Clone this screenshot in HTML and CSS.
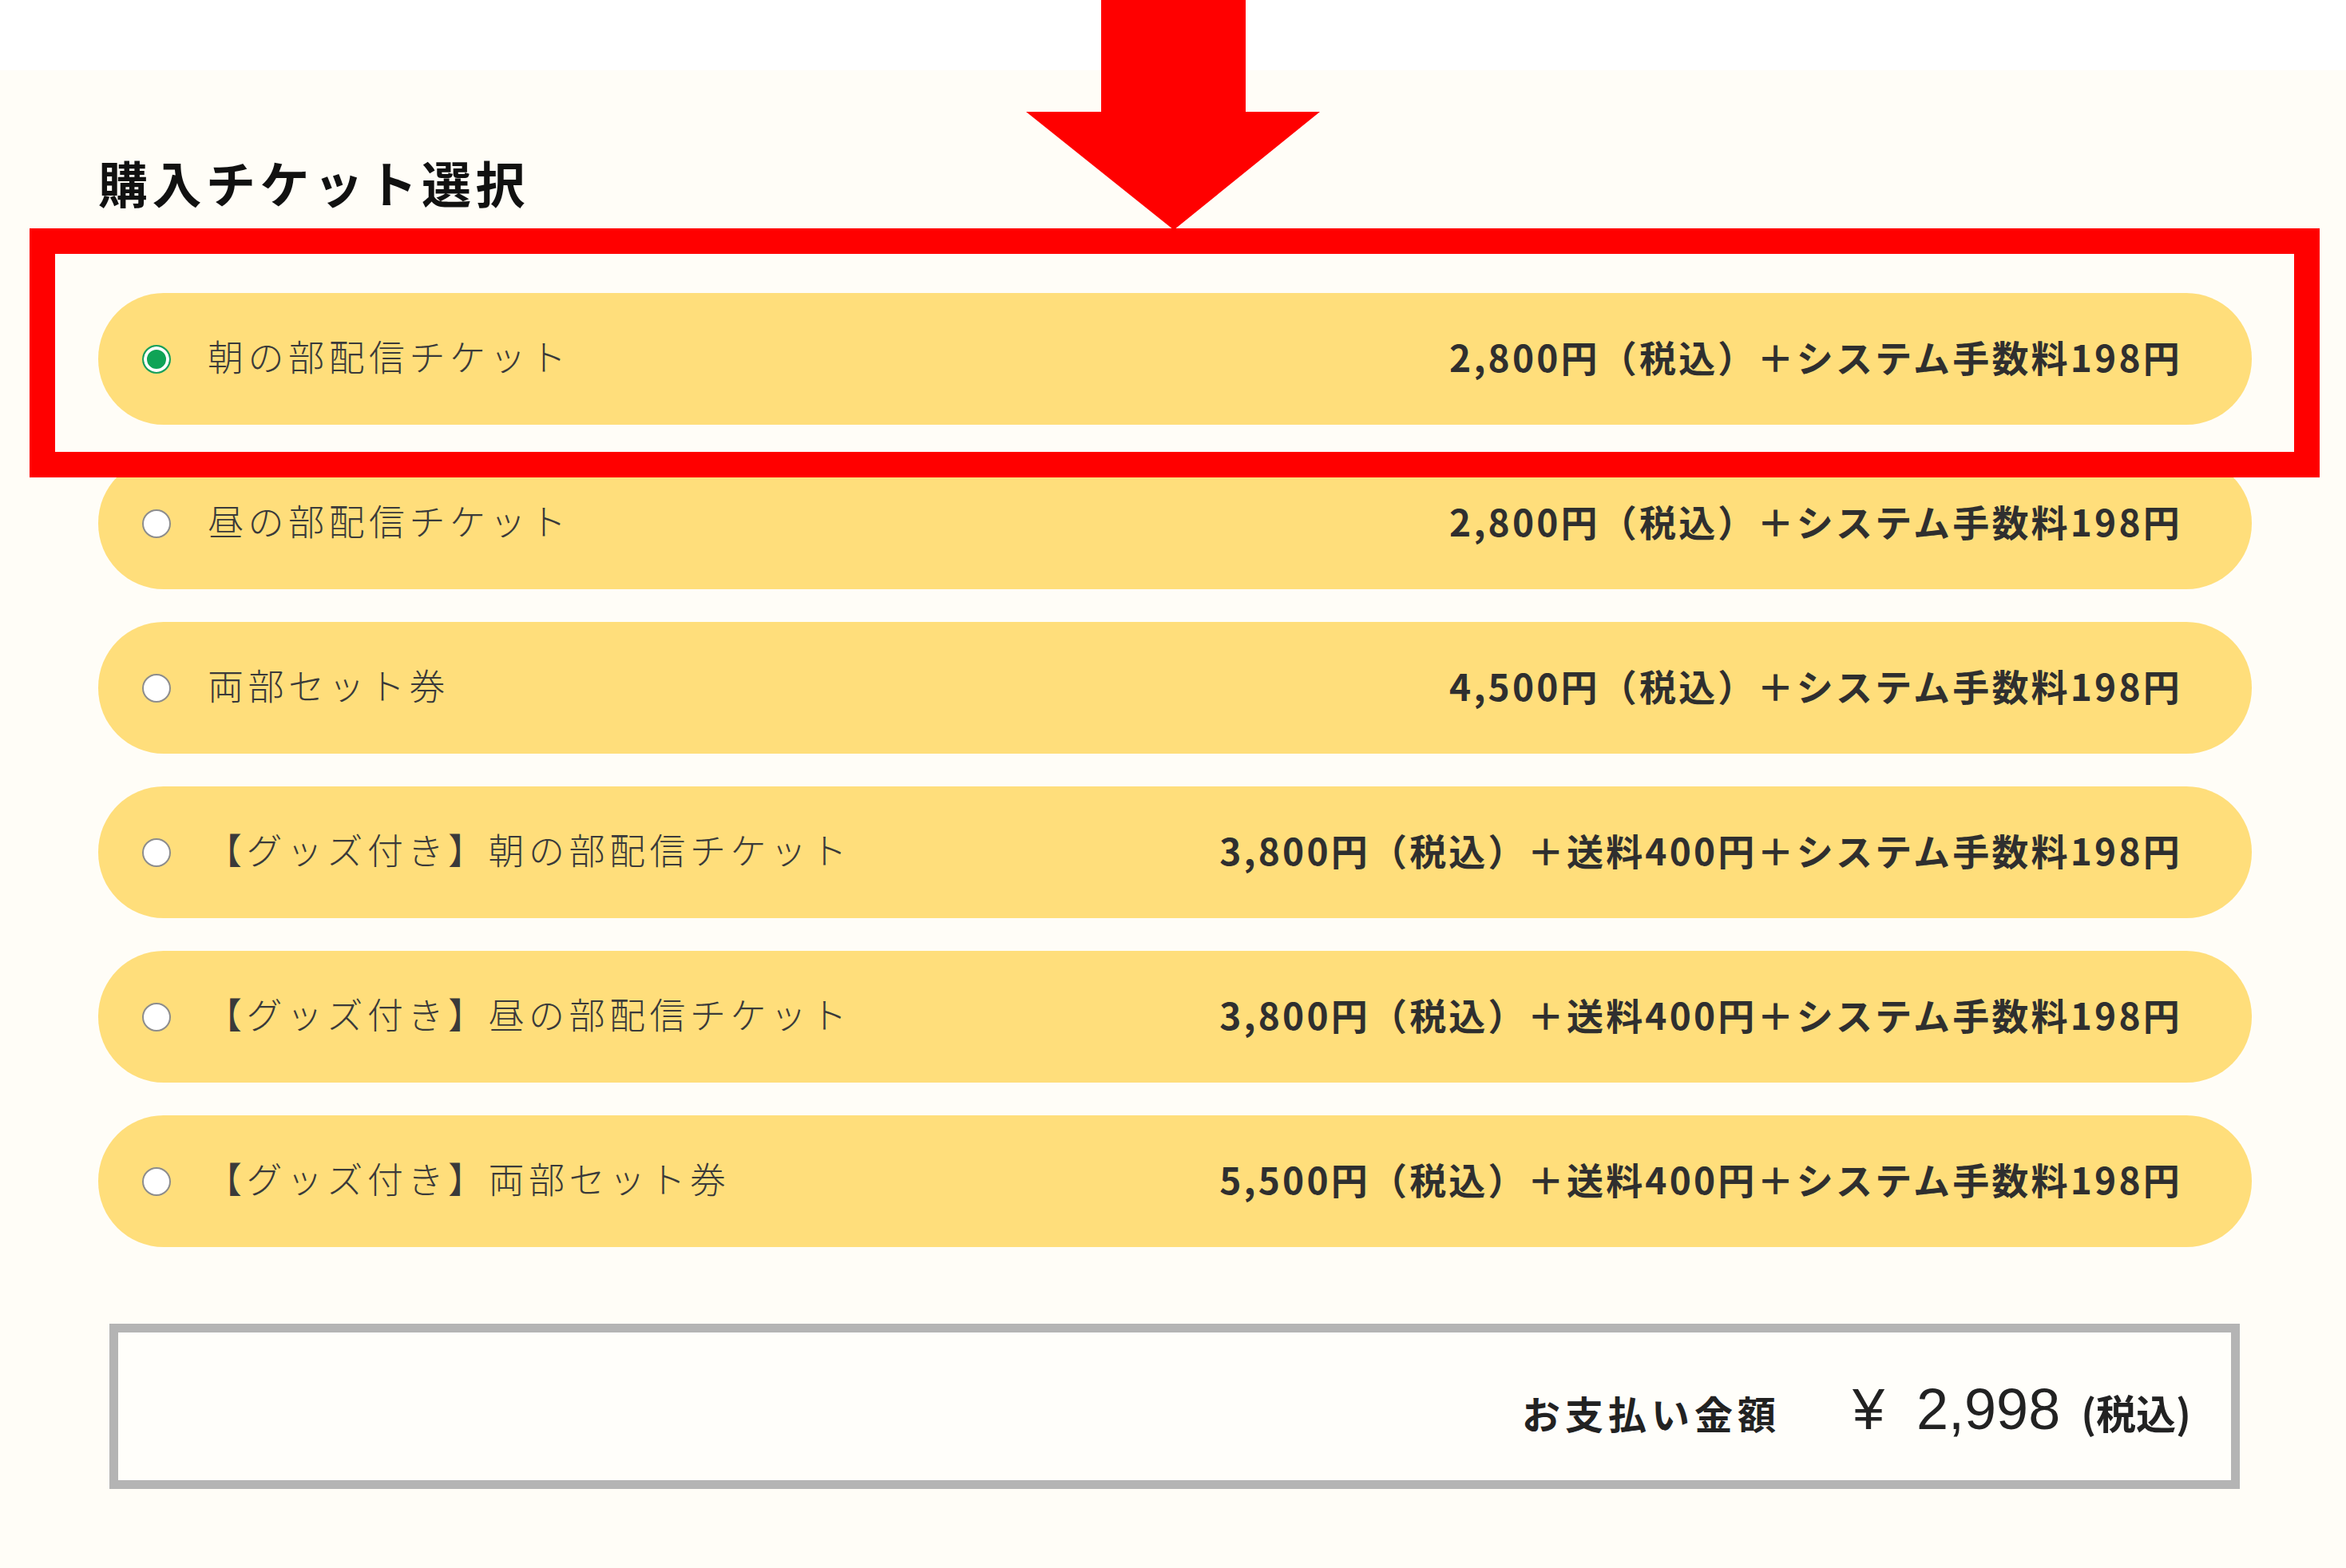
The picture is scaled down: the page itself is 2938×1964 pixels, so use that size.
FILE: index.html
```html
<!DOCTYPE html>
<html lang="ja">
<head>
<meta charset="utf-8">
<title>購入チケット選択</title>
<link rel="stylesheet" href="styles.css">
</head>
<body>
<div class="top-band"></div>
<main class="panel">
  <h2 class="title">購入チケット選択</h2>
  <ul class="tickets">
    <li class="ticket">
      <span class="radio radio-checked"></span>
      <span class="label">朝の部配信チケット</span>
      <span class="price">2,800円（税込）＋システム手数料198円</span>
    </li>
    <li class="ticket">
      <span class="radio"></span>
      <span class="label">昼の部配信チケット</span>
      <span class="price">2,800円（税込）＋システム手数料198円</span>
    </li>
    <li class="ticket">
      <span class="radio"></span>
      <span class="label">両部セット券</span>
      <span class="price">4,500円（税込）＋システム手数料198円</span>
    </li>
    <li class="ticket">
      <span class="radio"></span>
      <span class="label label-goods">【グッズ付き】朝の部配信チケット</span>
      <span class="price">3,800円（税込）＋送料400円＋システム手数料198円</span>
    </li>
    <li class="ticket">
      <span class="radio"></span>
      <span class="label label-goods">【グッズ付き】昼の部配信チケット</span>
      <span class="price">3,800円（税込）＋送料400円＋システム手数料198円</span>
    </li>
    <li class="ticket">
      <span class="radio"></span>
      <span class="label label-goods">【グッズ付き】両部セット券</span>
      <span class="price">5,500円（税込）＋送料400円＋システム手数料198円</span>
    </li>
  </ul>
  <div class="total">
    <span class="total-label">お支払い金額</span>
    <span class="yen">¥</span>
    <span class="amount">2,998</span>
    <span class="tax">(税込)</span>
  </div>
</main>
<svg class="annot-arrow" viewBox="0 0 368 288" width="368" height="288" aria-hidden="true">
  <polygon points="94,0 275,0 275,140 368,140 185,288 0,140 94,140" fill="#ff0000"/>
</svg>
<div class="annot-box"></div>
</body>
</html>
```

FILE: styles.css
```css
* {
  box-sizing: border-box;
}

html, body {
  margin: 0;
  padding: 0;
}

body {
  background: #fffdf7;
  font-family: "Noto Sans CJK JP", "Noto Sans", sans-serif;
  color: #333333;
  position: relative;
  min-height: 1964px;
}

.top-band {
  height: 88px;
  background: #ffffff;
}

.panel {
  padding: 109px 118px 0 123px;
}

.title {
  margin: 0 0 108px 0;
  font-size: 62px;
  line-height: 62px;
  font-weight: 700;
  letter-spacing: 5.5px;
  color: #111111;
}

.tickets {
  list-style: none;
  margin: 0;
  padding: 0;
  display: flex;
  flex-direction: column;
  gap: 41px;
}

.ticket {
  height: 165px;
  border-radius: 82px;
  background: #ffde7b;
  display: flex;
  align-items: center;
  padding: 0 87px 8px 55px;
}

.radio {
  flex: none;
  width: 36px;
  height: 36px;
  border-radius: 50%;
  background: #ffffff;
  border: 2px solid #8d8d8d;
  margin: 8px 46px 0 0;
}

.radio-checked {
  border-color: #19a05c;
  background: #0fa356;
  box-shadow: inset 0 0 0 4px #ffffff;
}

.label {
  font-size: 45px;
  font-weight: 300;
  letter-spacing: 5.5px;
  color: #3a3a3a;
  white-space: nowrap;
}

.label-goods {
  margin-left: -2px;
}

.price {
  margin-left: auto;
  font-size: 46px;
  font-weight: 700;
  letter-spacing: 3.2px;
  color: #2f2f2f;
  white-space: nowrap;
}

.total {
  margin: 96px 15px 0 14px;
  height: 207px;
  border: 11px solid #b4b4b4;
  background: #fffefa;
  display: flex;
  justify-content: flex-end;
  align-items: baseline;
  padding: 55px 50px 0 0;
  color: #222222;
}

.total-label {
  font-size: 48px;
  font-weight: 700;
  letter-spacing: 6px;
  margin-right: 90px;
}

.yen {
  font-family: "Liberation Sans", "Noto Sans", sans-serif;
  font-size: 72px;
  font-weight: 400;
  margin-right: 40px;
}

.amount {
  font-family: "Liberation Sans", "Noto Sans", sans-serif;
  font-size: 72px;
  font-weight: 400;
  margin-right: 26px;
}

.tax {
  font-size: 50px;
  font-weight: 700;
}

.annot-arrow {
  position: absolute;
  left: 1285px;
  top: 0;
  display: block;
}

.annot-box {
  position: absolute;
  left: 37px;
  top: 286px;
  width: 2868px;
  height: 312px;
  border: 32px solid #ff0000;
}
```
